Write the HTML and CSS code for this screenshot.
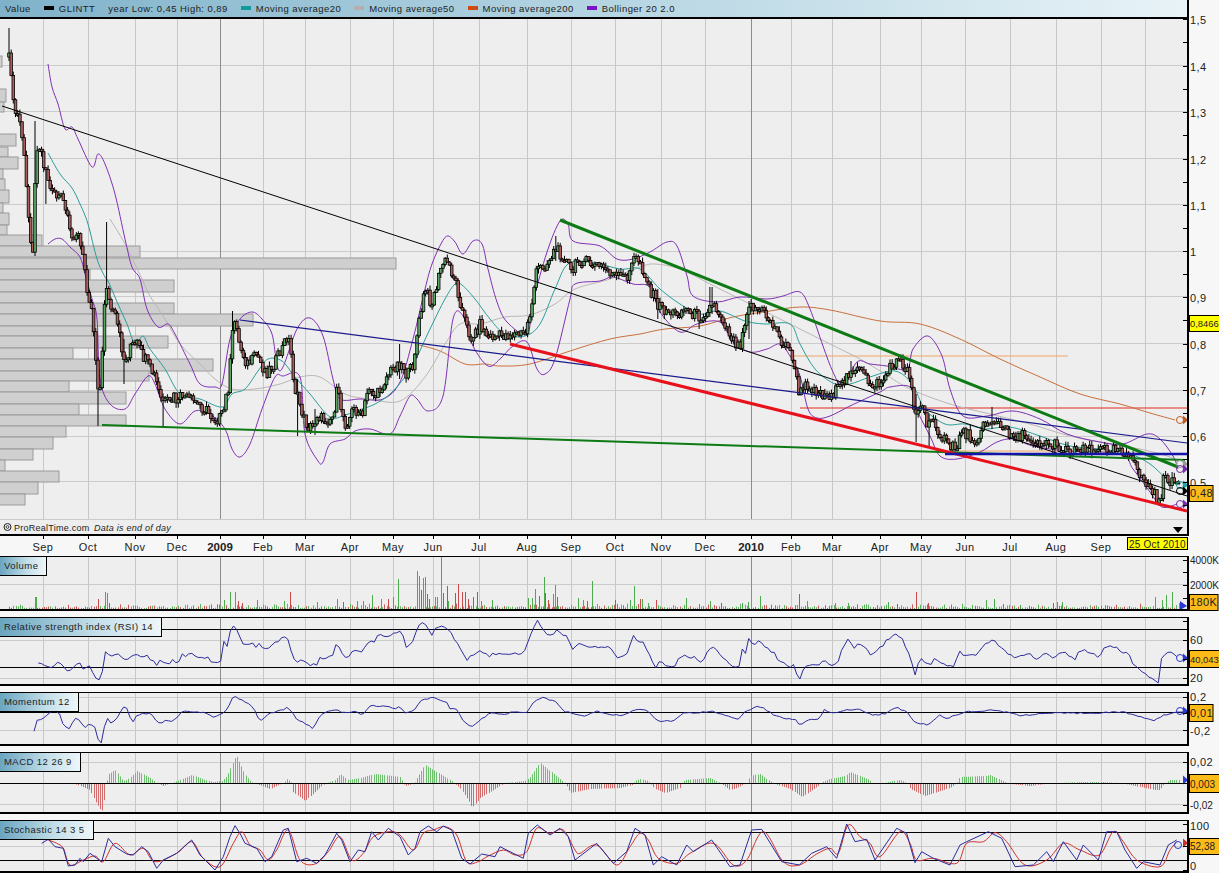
FILE: index.html
```html
<!DOCTYPE html>
<html lang="en">
<head>
    <meta charset="UTF-8">
    <title>GLINTT - ProRealTime chart</title>
    <link rel="stylesheet" href="styles.css">
</head>
<body>
    <div class="chart">
        <div class="panel price-panel">
            <div class="price-main">
                <div class="legend">
                    <span class="legend-item">Value</span>
                    <span class="legend-item"><i class="swatch swatch-black"></i>GLINTT</span>
                    <span class="legend-item">year Low: 0,45 High: 0,89</span>
                    <span class="legend-item"><i class="swatch swatch-teal"></i>Moving average20</span>
                    <span class="legend-item"><i class="swatch swatch-grey"></i>Moving average50</span>
                    <span class="legend-item"><i class="swatch swatch-orange"></i>Moving average200</span>
                    <span class="legend-item"><i class="swatch swatch-purple"></i>Bollinger 20 2.0</span>
                </div>
                <svg class="plot-svg" id="price-plot" width="1187" height="517"></svg>
            </div>
            <svg class="axis" id="price-axis" width="30" height="536"></svg>
        </div>
        <svg class="time-axis" id="time-axis" width="1219" height="20"></svg>

        <div class="indicators">
            <div class="panel volume-panel">
                <div class="plot">
                    <div class="tab">Volume</div>
                    <svg class="plot-svg" id="volume-plot" width="1187" height="52"></svg>
                </div>
                <svg class="axis" id="volume-axis" width="30" height="55"></svg>
            </div>
            <div class="panel rsi-panel">
                <div class="plot">
                    <div class="tab">Relative strength index (RSI) 14</div>
                    <svg class="plot-svg" id="rsi-plot" width="1187" height="66"></svg>
                </div>
                <svg class="axis" id="rsi-axis" width="30" height="69"></svg>
            </div>
            <div class="panel momentum-panel">
                <div class="plot">
                    <div class="tab">Momentum 12</div>
                    <svg class="plot-svg" id="momentum-plot" width="1187" height="51"></svg>
                </div>
                <svg class="axis" id="momentum-axis" width="30" height="54"></svg>
            </div>
            <div class="panel macd-panel">
                <div class="plot">
                    <div class="tab">MACD 12 26 9</div>
                    <svg class="plot-svg" id="macd-plot" width="1187" height="59"></svg>
                </div>
                <svg class="axis" id="macd-axis" width="30" height="62"></svg>
            </div>
            <div class="panel stochastic-panel">
                <div class="plot">
                    <div class="tab">Stochastic 14 3 5</div>
                    <svg class="plot-svg" id="stochastic-plot" width="1187" height="50"></svg>
                </div>
                <svg class="axis" id="stochastic-axis" width="30" height="53"></svg>
            </div>
        </div>
    </div>

    <script src="chart.js"></script>
</body>
</html>
```

FILE: styles.css
```css
body {
    margin: 0;
    background: #f7f7f7;
    font-family: "Liberation Sans", Arial, sans-serif;
    overflow: hidden;
}
.chart {
    width: 1219px;
    height: 873px;
    overflow: hidden;
}
.panel {
    display: flex;
    width: 1219px;
}
.price-panel {
    height: 536px;
}
.price-main {
    width: 1187px;
    flex: none;
    border-right: 2px solid #000;
    border-bottom: 2px solid #000;
    height: 534px;
    overflow: hidden;
    background: #eeeeee;
}
.legend {
    height: 18px;
    box-sizing: border-box;
    border-bottom: 1px solid #000;
    background: linear-gradient(90deg, #7fb2ca 0%, #b4d4e2 50%, #e8f3f7 100%);
    display: flex;
    align-items: center;
    gap: 13px;
    padding-left: 5px;
    font-size: 9.5px;
    letter-spacing: 0.45px;
    color: #222;
    white-space: nowrap;
}
.swatch {
    display: inline-block;
    width: 10px;
    height: 4px;
    margin-right: 5px;
    vertical-align: 2px;
}
.swatch-black { background: #000; }
.swatch-teal { background: #119c9c; }
.swatch-grey { background: #b5aeae; }
.swatch-orange { background: #d24a10; }
.swatch-purple { background: #7a10c8; }
.plot-svg {
    display: block;
}
.axis {
    display: block;
    flex: none;
    overflow: hidden;
}
.axis text, .time-axis text {
    font-size: 11px;
    letter-spacing: 0.4px;
    fill: #222;
}
.axis .small {
    font-size: 10px;
    letter-spacing: 0;
}
.axis .smaller {
    font-size: 9.4px;
    letter-spacing: 0;
}
.time-axis {
    display: block;
}
.time-axis .year {
    font-weight: bold;
    letter-spacing: 0;
    font-size: 11.5px;
}
.time-axis .date-text {
    font-size: 10px;
    letter-spacing: 0.2px;
}
.plot-svg text {
    font-size: 9px;
    letter-spacing: 0.25px;
    fill: #222;
}
.plot-svg .italic {
    font-style: italic;
}
.indicators {
    display: flex;
    flex-direction: column;
    gap: 6px;
}
.plot {
    position: relative;
    width: 1187px;
    flex: none;
    border-top: 1px solid #000;
    border-right: 2px solid #000;
    border-bottom: 2px solid #000;
    background: #eeeeee;
    overflow: hidden;
}
.volume-panel { height: 55px; }
.rsi-panel { height: 69px; }
.momentum-panel { height: 54px; }
.macd-panel { height: 62px; }
.stochastic-panel { height: 53px; }
.tab {
    position: absolute;
    top: 0;
    left: 0;
    height: 18px;
    line-height: 18px;
    padding: 0 8px 0 4px;
    border-right: 1px solid #000;
    border-bottom: 1px solid #000;
    background: linear-gradient(90deg, #6aa5c0 0%, #c4dfe9 60%, #eef6f9 100%);
    font-size: 9.5px;
    letter-spacing: 0.45px;
    color: #222;
    white-space: nowrap;
}
```

FILE: chart.js
```js
// all series are kept in page pixels, each svg's viewBox maps to its place on the page
const gridX = [43, 88, 135, 177, 220, 263, 305, 350, 393, 433, 479, 527, 571, 615, 661, 705, 751, 791, 832, 880, 921, 965, 1010, 1056, 1101, 1145];
const yearLines = [220, 751];

function rnd(i) {
    const v = Math.sin(i * 12.9898) * 43758.5453;
    return v - Math.floor(v);
}

// samples were read off 3x crops: flat x,y list plus the crop's origin
function crop(ox, oy, list) {
    const out = [];
    for (let i = 0; i < list.length; i += 2) {
        out.push([ox + list[i] / 3, oy + list[i + 1] / 3]);
    }
    return out;
}

function pairs(list) {
    return crop(0, 0, list.map(v => v * 3));
}

function line(x1, y1, x2, y2, color, width) {
    return `<line x1="${x1}" y1="${y1}" x2="${x2}" y2="${y2}" stroke="${color}" stroke-width="${width}"/>`;
}

function poly(points, color, width) {
    const d = points.map(p => p[0].toFixed(1) + ',' + p[1].toFixed(1)).join(' ');
    return `<polyline points="${d}" fill="none" stroke="${color}" stroke-width="${width}"/>`;
}

// catmull-rom through the samples, the averages are smooth in the original
function curve(p, color, width) {
    let d = `M${p[0][0].toFixed(1)} ${p[0][1].toFixed(1)}`;
    for (let i = 0; i < p.length - 1; i++) {
        const a = p[Math.max(i - 1, 0)], b = p[i], c = p[i + 1], e = p[Math.min(i + 2, p.length - 1)];
        const c1x = b[0] + (c[0] - a[0]) / 6, c1y = b[1] + (c[1] - a[1]) / 6;
        const c2x = c[0] - (e[0] - b[0]) / 6, c2y = c[1] - (e[1] - b[1]) / 6;
        d += `C${c1x.toFixed(1)} ${c1y.toFixed(1)} ${c2x.toFixed(1)} ${c2y.toFixed(1)} ${c[0].toFixed(1)} ${c[1].toFixed(1)}`;
    }
    return `<path d="${d}" fill="none" stroke="${color}" stroke-width="${width}"/>`;
}

function marker(x, y, color) {
    return `<circle cx="${x - 7}" cy="${y}" r="3.5" fill="none" stroke="${color}" stroke-width="1"/>` + arrow(x, y, color);
}

function arrow(x, y, color) {
    return `<polygon points="${x - 4},${y - 4.5} ${x + 1},${y} ${x - 4},${y + 4.5}" fill="${color}"/>`;
}

function interp(points, x) {
    if (x <= points[0][0]) return points[0][1];
    for (let i = 1; i < points.length; i++) {
        if (x <= points[i][0]) {
            const a = points[i - 1], b = points[i];
            return a[1] + (b[1] - a[1]) * (x - a[0]) / (b[0] - a[0] || 1);
        }
    }
    return points[points.length - 1][1];
}

// daily noise on top of the read samples for the oscillators
function jagged(points, amp) {
    const out = [];
    const last = points[points.length - 1][0];
    let n = 0;
    for (let x = points[0][0]; x < last; x += 3.2) {
        out.push([x, interp(points, x) + (rnd(n++ + 300) - 0.5) * amp]);
    }
    out.push(points[points.length - 1]);
    return out;
}

function grid(top, bottom, rows) {
    let s = '';
    rows.forEach(y => { s += line(0, y + 0.5, 1187, y + 0.5, '#cbcbcb', 1); });
    gridX.forEach(x => {
        s += line(x + 0.5, top, x + 0.5, bottom, yearLines.includes(x) ? '#8c8c8c' : '#c8c8c8', 1);
    });
    return s;
}

function ticks(ys) {
    return ys.map(y => line(1183, y + 0.5, 1187, y + 0.5, '#000', 1)).join('');
}

function setup(id, top, height, left, width, html) {
    const svg = document.getElementById(id);
    svg.setAttribute('viewBox', `${left} ${top} ${width} ${height}`);
    svg.innerHTML = html;
}

// the scale is 30px wide, long values get a smaller size so they stay inside it
function sizeClass(text) {
    if (text.length >= 6) return ' class="smaller"';
    if (text.length === 5) return ' class="small"';
    return '';
}

function axisLabel(y, text) {
    return `<text x="1190" y="${y + 4}"${sizeClass(text)}>${text}</text>`;
}

function axisTag(y1, y2, right, color, text) {
    return `<rect x="1189.5" y="${y1 + 0.5}" width="${right - 1189.5}" height="${y2 - y1}" fill="${color}" stroke="#000" stroke-width="1"/>` +
        `<text x="1190" y="${y2 - 4}"${sizeClass(text)}>${text}</text>`;
}

// ---------- price panel ----------
const profile = [
    [57, 68, 2], [90, 103, 6], [103, 113, 4], [135, 147, 16], [148, 158, 8], [158, 170, 18], [170, 180, 3],
    [180, 192, 5], [191, 204, 9], [204, 214, 3], [214, 226, 9], [226, 236, 7], [236, 247, 42], [247, 258, 140],
    [259, 270, 396], [270, 281, 90], [281, 293, 174], [293, 304, 90], [304, 315, 174], [315, 327, 253],
    [327, 337, 92], [337, 349, 168], [349, 360, 73], [360, 372, 213], [372, 382, 149], [382, 393, 69],
    [393, 405, 126], [405, 416, 79], [416, 427, 126], [427, 438, 66], [438, 450, 53], [450, 461, 33],
    [461, 472, 5], [472, 483, 59], [483, 495, 38], [495, 506, 25]
];

const pricePath = pairs([
    9, 60, 11, 66, 12, 98, 14, 110, 16, 115, 19, 118, 22, 137, 24, 158, 27, 198, 29, 224, 31, 240, 33, 250,
    35, 190, 36, 150, 38, 143, 40, 148, 42, 155, 45, 170, 47, 173, 50, 192, 53, 187, 56, 197, 60, 197, 64, 205,
    67, 218, 69, 232, 72, 240, 75, 232, 78, 235, 82, 255, 85, 270, 88, 295, 90, 300, 93, 320, 95, 350, 97, 375,
    99, 395, 101, 385, 103, 340, 105, 290, 107, 285, 109, 305, 113, 315, 116, 320, 120, 340, 124, 360, 127, 362,
    130, 345, 134, 348, 137, 345, 141, 355, 146, 362, 150, 370, 155, 378, 158, 390, 161, 400, 165, 403, 170, 405,
    174, 398, 178, 405, 182, 395, 187, 400, 192, 402, 198, 405, 205, 410, 212, 418, 218, 420, 223, 416, 226, 398,
    229, 385, 232, 340, 234, 322, 237, 325, 239, 345, 243, 355, 247, 365, 252, 362, 257, 355, 262, 367, 267, 373,
    272, 367, 277, 360, 282, 350, 287, 337, 290, 345, 293, 375, 296, 395, 300, 405, 304, 420, 308, 428, 313, 428,
    317, 415, 322, 420, 328, 420, 333, 418, 337, 392, 341, 408, 345, 425, 349, 420, 353, 410, 358, 412, 362, 420,
    367, 395, 370, 385, 374, 398, 378, 395, 383, 385, 388, 375, 393, 370, 397, 365, 403, 365, 407, 378, 413, 365,
    418, 330, 425, 290, 432, 305, 442, 265, 447, 262, 455, 280, 462, 310, 467, 330, 472, 340, 480, 325, 488, 338,
    500, 337, 513, 335, 525, 335, 530, 315, 537, 270, 547, 265, 555, 250, 565, 258, 572, 275, 578, 260, 590, 265,
    603, 268, 617, 278, 627, 278, 635, 258, 640, 262, 648, 285, 657, 305, 663, 310, 675, 315, 685, 310, 700, 318,
    713, 305, 722, 318, 730, 335, 737, 345, 740, 345, 743, 330, 748, 305, 763, 313, 773, 325, 780, 340, 792, 355,
    798, 390, 800, 395, 807, 385, 817, 392, 827, 397, 837, 392, 843, 385, 850, 370, 860, 372, 870, 385, 880, 385,
    890, 370, 897, 360, 907, 370, 912, 385, 915, 420, 917, 410, 923, 408, 928, 430, 933, 418, 940, 435, 948, 447,
    957, 450, 960, 430, 970, 438, 977, 440, 985, 425, 993, 420, 1003, 430, 1013, 436, 1027, 438, 1040, 443,
    1057, 447, 1073, 452, 1083, 447, 1100, 451, 1117, 447, 1125, 453, 1130, 460, 1140, 475, 1150, 490, 1160, 503,
    1162, 490, 1163, 482, 1173, 480, 1180, 490
]);

const longWicks = [
    [9, 29, 62], [36, 122, 170], [46, 190, 205], [99, 380, 427], [107, 223, 285], [124, 340, 385], [163, 395, 427],
    [232, 312, 360], [297, 380, 437], [315, 410, 436], [400, 345, 380], [555, 237, 262], [657, 290, 320],
    [700, 310, 330], [711, 288, 315], [748, 302, 340], [915, 395, 443], [930, 415, 447], [993, 408, 430],
    [850, 362, 380], [1172, 473, 490]
];

const ma20 = pairs([
    48, 154, 60, 175, 72, 189, 80, 205, 88, 225, 97, 260, 105, 278, 108, 282, 118, 305, 127, 325, 135, 345, 143, 337,
    150, 350, 165, 370, 180, 395, 200, 400, 222, 408, 232, 395, 245, 390, 258, 372, 268, 360, 282, 362, 295, 378,
    310, 395, 330, 418, 345, 416, 362, 410, 375, 405, 390, 395, 405, 378, 415, 362, 430, 330, 445, 300, 455, 285,
    462, 286, 475, 300, 490, 320, 505, 335, 525, 337, 540, 325, 555, 290, 568, 265, 590, 263, 620, 270, 640, 270,
    660, 290, 680, 305, 700, 315, 720, 312, 745, 322, 765, 325, 790, 325, 800, 345, 815, 370, 835, 385, 850, 385,
    870, 378, 895, 372, 912, 385, 925, 410, 945, 425, 965, 425, 985, 430, 1010, 428, 1040, 437, 1070, 447, 1100, 450,
    1130, 455, 1150, 465, 1165, 478, 1180, 486
]);

const ma50 = pairs([
    110, 220, 125, 245, 142, 280, 150, 297, 165, 320, 180, 345, 200, 365, 215, 380, 232, 390, 255, 390, 280, 385,
    300, 378, 320, 378, 345, 395, 370, 400, 400, 402, 425, 378, 445, 345, 460, 325, 480, 325, 505, 318, 530, 316,
    555, 305, 575, 290, 610, 280, 640, 268, 655, 265, 680, 270, 710, 285, 740, 300, 770, 315, 800, 330, 830, 345,
    860, 360, 885, 375, 910, 390, 950, 405, 990, 415, 1030, 425, 1070, 437, 1110, 445, 1140, 450, 1170, 458, 1178, 465
]);

const ma200 = pairs([
    415, 345, 440, 352, 465, 365, 485, 365, 500, 367, 530, 365, 570, 352, 610, 340, 640, 335, 665, 330, 700, 327,
    733, 318, 770, 312, 800, 308, 830, 311, 880, 322, 920, 325, 960, 340, 1000, 360, 1040, 378, 1080, 395, 1120, 405,
    1150, 414, 1175, 421
]);

const bollUp = pairs([
    48, 65, 52, 88, 58, 105, 65, 130, 72, 128, 78, 140, 92, 168, 98, 155, 105, 165, 115, 195, 125, 240, 132, 268,
    140, 280, 147, 310, 158, 328, 168, 325, 175, 335, 190, 365, 200, 385, 215, 388, 222, 385, 230, 340, 240, 320,
    252, 313, 262, 320, 272, 335, 280, 372, 297, 330, 310, 319, 323, 337, 333, 380, 340, 400, 360, 400, 383, 400,
    400, 383, 413, 340, 425, 290, 432, 265, 442, 243, 448, 237, 455, 243, 463, 255, 473, 242, 482, 245, 488, 270,
    497, 303, 507, 323, 527, 335, 533, 303, 547, 253, 560, 222, 568, 225, 573, 242, 600, 247, 617, 260, 633, 260,
    650, 253, 667, 243, 677, 247, 687, 277, 693, 297, 717, 303, 740, 298, 767, 300, 783, 297, 800, 293, 810, 310,
    823, 347, 833, 373, 843, 387, 857, 363, 870, 365, 887, 367, 907, 370, 913, 350, 928, 337, 942, 357, 950, 390,
    963, 417, 987, 417, 1013, 412, 1040, 420, 1067, 435, 1100, 443, 1123, 445, 1147, 435, 1160, 440, 1173, 457, 1178, 470
]);

const bollDown = pairs([
    48, 245, 55, 240, 62, 240, 70, 248, 80, 258, 85, 275, 92, 300, 97, 320, 100, 380, 110, 405, 125, 410, 135, 395,
    148, 377, 155, 385, 165, 410, 180, 425, 195, 412, 210, 415, 225, 430, 232, 450, 240, 458, 250, 445, 262, 410,
    275, 378, 283, 377, 300, 378, 305, 435, 318, 462, 323, 463, 330, 445, 345, 440, 355, 432, 370, 430, 390, 435,
    400, 417, 410, 397, 417, 400, 428, 412, 443, 397, 453, 320, 463, 317, 473, 347, 488, 367, 500, 360, 513, 347,
    527, 343, 537, 370, 545, 375, 555, 360, 570, 300, 575, 285, 600, 282, 613, 278, 633, 285, 650, 288, 660, 313,
    680, 333, 697, 325, 720, 323, 733, 343, 750, 353, 767, 350, 780, 345, 790, 357, 800, 377, 808, 410, 817, 419,
    830, 417, 850, 407, 880, 393, 890, 388, 910, 388, 915, 407, 930, 437, 940, 457, 957, 460, 980, 453, 997, 443,
    1013, 440, 1033, 447, 1067, 452, 1120, 455, 1133, 470, 1150, 493, 1162, 508, 1177, 505
]);

function candles() {
    let out = '';
    let prev = pricePath[0][1] - 2;
    for (let i = 0; i * 2.17 + 9 <= 1180; i++) {
        const x = i * 2.17 + 9;
        const close = interp(pricePath, x) + (rnd(i) - 0.5) * 12;
        const open = prev;
        let hi = Math.min(open, close) - rnd(i + 700) * 5;
        let lo = Math.max(open, close) + rnd(i + 1400) * 5;
        longWicks.forEach(w => {
            if (Math.abs(w[0] - x) < 1.1) { hi = Math.min(hi, w[1]); lo = Math.max(lo, w[2]); }
        });
        const up = close < open;
        out += line(x.toFixed(1), hi.toFixed(1), x.toFixed(1), lo.toFixed(1), '#000', 1);
        out += `<rect x="${(x - 1.3).toFixed(1)}" y="${Math.min(open, close).toFixed(1)}" width="2.6" height="${Math.max(Math.abs(open - close), 2).toFixed(1)}" fill="${up ? '#5fa864' : '#ab5f5c'}" stroke="#000" stroke-width="0.8"/>`;
        prev = close;
    }
    return out;
}

let price = grid(19, 520, [66, 112, 159, 205, 252, 297, 344, 391, 437, 482, 520]);
price += line(0, 19.5, 1187, 19.5, '#000', 1);
profile.forEach(b => {
    price += `<rect x="-1" y="${b[0]}" width="${b[2] + 1}" height="${b[1] - b[0]}" fill="#cfcfcf" stroke="#9a9a9a" stroke-width="1"/>`;
});
price += line(800, 409, 1187, 409, '#e8281c', 1);
price += line(790, 357, 1068, 357, '#f2a468', 1);
price += line(945, 452, 1130, 452, '#f2a468', 1);
price += curve(ma200, '#c8703c', 1);
price += curve(ma50, '#bdb5b5', 1);
price += curve(bollUp, '#8030b4', 1);
price += curve(bollDown, '#8030b4', 1);
price += curve(ma20, '#2a9d9a', 1);
price += candles();
price += line(2, 107, 1187, 497, '#000', 1);
price += line(240, 321, 1187, 444, '#1a1a8c', 1.2);
price += line(102, 426, 1185, 461, '#0d7a14', 2);
price += line(560, 221, 1178, 468, '#0d7a14', 3);
price += line(510, 345, 1187, 512, '#e8101a', 3);
price += line(945, 455, 1187, 455, '#1414a8', 2.5);
price += marker(1187, 421, '#c05a20') + marker(1187, 465, '#9a9a9a') + marker(1187, 470, '#7b2cb4');
price += marker(1187, 486, '#1fa5a5') + marker(1187, 492, '#000') + marker(1187, 505, '#7b2cb4');
price += `<polygon points="1173,528 1183,528 1178,534" fill="#000"/>`;
price += ticks([20, 43, 67, 90, 113, 136, 160, 183, 206, 229, 252, 275, 298, 321, 345, 368, 391, 414, 437, 460, 483, 506]);
price += `<circle cx="7.5" cy="528" r="3.5" fill="none" stroke="#222" stroke-width="1"/><circle cx="7.5" cy="528" r="1.4" fill="none" stroke="#222" stroke-width="0.8"/>`;
price += `<text x="14" y="532">ProRealTime.com</text><text x="94" y="532" class="italic">Data is end of day</text>`;
setup('price-plot', 19, 517, 0, 1187, price);

let priceAxis = '';
[[20, '1,5'], [67, '1,4'], [113, '1,3'], [160, '1,2'], [206, '1,1'], [252, '1'], [298, '0,9'], [345, '0,8'], [391, '0,7'], [437, '0,6'], [483, '0,5']].forEach(t => {
    priceAxis += axisLabel(t[0], t[1]);
});
priceAxis += axisTag(315, 331, 1225, '#ffff00', '0,8466');
priceAxis += axisTag(485, 501, 1213, '#fdbb1a', '0,48');
setup('price-axis', 0, 536, 1189, 30, priceAxis);

// ---------- time axis ----------
const months = [
    [43, 'Sep'], [88, 'Oct'], [135, 'Nov'], [177, 'Dec'], [220, '2009'], [263, 'Feb'], [305, 'Mar'], [350, 'Apr'], [393, 'May'],
    [433, 'Jun'], [479, 'Jul'], [527, 'Aug'], [571, 'Sep'], [615, 'Oct'], [661, 'Nov'], [705, 'Dec'], [751, '2010'], [791, 'Feb'],
    [832, 'Mar'], [880, 'Apr'], [921, 'May'], [965, 'Jun'], [1010, 'Jul'], [1056, 'Aug'], [1101, 'Sep']
];
let timeAxis = '';
months.forEach(m => {
    const year = m[1].length === 4;
    timeAxis += line(m[0] + 0.5, 536, m[0] + 0.5, 539, '#000', 1);
    timeAxis += `<text x="${m[0]}" y="551" text-anchor="middle"${year ? ' class="year"' : ''}>${m[1]}</text>`;
});
timeAxis += `<rect x="1127.5" y="537.5" width="60" height="12" fill="#ffff00" stroke="#000" stroke-width="1"/>`;
timeAxis += `<text x="1129" y="547.5" class="date-text">25 Oct 2010</text>`;
setup('time-axis', 536, 20, 0, 1219, timeAxis);

// ---------- volume ----------
const volumePeaks = [
    [35, 12, 1], [36, 12, 1], [98, 10, 0], [105, 17, 1], [107, 16, 1], [109, 6, 0], [224, 9, 1], [230, 17, 1], [235, 17, 1], [238, 8, 0],
    [242, 6, 0], [257, 9, 1], [284, 8, 1], [290, 17, 0], [317, 7, 1], [337, 10, 1], [343, 7, 0], [357, 8, 1], [363, 8, 1], [372, 14, 1],
    [381, 10, 1], [388, 10, 0], [393, 12, 1], [398, 30, 1], [417, 38, 1], [419, 33, 1], [421, 19, 0], [423, 31, 1], [425, 32, 1], [427, 15, 0],
    [429, 10, 0], [435, 12, 1], [437, 12, 1], [441, 52, 1], [443, 16, 0], [447, 23, 0], [448, 8, 1], [455, 16, 0], [458, 25, 0], [462, 17, 0],
    [465, 17, 0], [468, 10, 0], [473, 12, 0], [477, 17, 0], [481, 8, 1], [492, 9, 1], [528, 11, 1], [532, 11, 1], [535, 20, 1], [539, 13, 0],
    [544, 32, 1], [545, 16, 0], [548, 9, 0], [553, 15, 1], [555, 24, 1], [557, 12, 0], [578, 11, 1], [583, 9, 1], [587, 8, 0], [592, 28, 1],
    [615, 9, 0], [630, 9, 1], [634, 23, 1], [640, 10, 0], [642, 10, 1], [648, 6, 1], [656, 9, 0], [686, 11, 1], [710, 8, 1], [721, 6, 0],
    [742, 6, 1], [748, 7, 1], [760, 13, 1], [799, 15, 0], [807, 8, 1], [835, 6, 1], [848, 6, 1], [888, 7, 1], [897, 5, 0], [916, 17, 0],
    [928, 6, 0], [986, 9, 1], [994, 10, 1], [1053, 6, 0], [1057, 7, 1], [1062, 7, 1], [1020, 4, 1], [1155, 12, 1], [1162, 9, 1], [1166, 14, 1],
    [1172, 17, 1], [1179, 6, 1]
];
let volume = grid(557, 609, [584]);
for (let i = 0; i * 2.17 + 9 <= 1180; i++) {
    const x = Math.round(i * 2.17 + 9) + 0.5;
    const h = 1 + rnd(i + 50) * rnd(i + 90) * 5;
    volume += line(x, 609, x, 609 - h, rnd(i + 33) > 0.45 ? '#5cb45c' : '#cc5a5a', 1);
}
volumePeaks.forEach(p => {
    volume += line(p[0] + 0.5, 609, p[0] + 0.5, 609 - p[1], p[2] ? '#4cac4c' : '#c84a4a', 1);
});
volume += `<polygon points="1180,601 1187,606 1180,610" fill="#2a3ad0"/>`;
volume += ticks([560, 572, 585, 598]);
setup('volume-plot', 557, 52, 0, 1187, volume);
setup('volume-axis', 556, 55, 1189, 30,
    axisLabel(560, '4000K') + axisLabel(585, '2000K') + axisTag(594, 610, 1218, '#fdbb1a', '180K'));

// ---------- rsi ----------
const rsi = [
    ...crop(0, 550, [115, 342, 135, 343, 150, 355, 160, 347, 175, 338, 190, 347, 208, 365, 225, 345, 240, 340, 250, 357, 265, 342, 275, 368, 295, 388, 305, 378, 315, 300, 335, 320, 350, 310, 380, 330, 400, 310, 420, 318, 440, 316, 470, 342, 480, 330, 510, 340, 520, 328, 535, 342, 545, 310, 560, 322, 570, 310, 600, 323, 625, 322, 635, 340, 665, 330, 672, 275, 680, 297, 695, 225, 705, 225, 720, 265, 735, 288, 755, 280, 770, 290, 775, 275, 795, 298, 830, 275, 850, 260, 865, 265, 875, 310, 895, 345, 905, 330, 925, 345, 950, 342, 955, 320, 975, 325, 1000, 318, 1010, 278, 1030, 320, 1045, 322, 1060, 295, 1080, 310, 1110, 270, 1120, 280, 1140, 250, 1165, 262, 1200, 240]),
    ...crop(400, 550, [5, 243, 18, 292, 40, 270, 55, 225, 72, 217, 95, 255, 105, 240, 128, 225, 150, 238, 165, 270, 180, 298, 200, 330, 240, 300, 265, 318, 300, 307, 340, 313, 370, 310, 395, 245, 412, 212, 430, 240, 445, 262, 470, 240, 505, 262, 518, 303, 535, 278, 565, 288, 630, 292, 658, 328, 680, 310, 703, 247, 715, 290, 725, 262, 750, 320, 767, 355, 775, 330, 800, 345, 822, 355, 830, 328, 855, 315, 870, 330, 880, 320, 905, 335, 935, 285, 960, 310, 1000, 355, 1018, 352, 1025, 293, 1035, 315, 1045, 265, 1060, 285, 1078, 272, 1110, 305, 1118, 300, 1140, 338, 1170, 348, 1180, 343, 1198, 393]),
    ...crop(700, 550, [315, 350, 335, 347, 352, 350, 370, 328, 385, 343, 412, 345, 425, 295, 445, 265, 460, 300, 470, 280, 500, 292, 515, 317, 545, 290, 565, 265, 585, 253, 610, 272, 630, 320, 645, 375, 660, 322, 690, 350, 700, 325, 740, 350, 765, 345, 778, 300, 790, 312, 825, 317, 855, 278, 880, 270, 900, 290, 945, 325, 985, 310, 1010, 325, 1040, 310, 1060, 325, 1075, 315, 1095, 310, 1125, 332, 1140, 298, 1185, 310, 1198, 325]),
    ...crop(1000, 530, [300, 385, 305, 350, 325, 350, 345, 350, 360, 365, 385, 370, 395, 395, 410, 412, 440, 435, 475, 457, 480, 410, 488, 375, 515, 362, 530, 380])
];
let rsiSvg = grid(618, 684, [640, 678]);
rsiSvg += line(0, 629.5, 1187, 629.5, '#000', 1) + line(0, 667.5, 1187, 667.5, '#000', 1);
rsiSvg += poly(jagged(rsi, 3), '#2b2b9e', 1) + marker(1187, 658, '#2a3ad0');
rsiSvg += ticks([621, 640, 659, 678]);
setup('rsi-plot', 618, 66, 0, 1187, rsiSvg);
setup('rsi-axis', 617, 69, 1189, 30,
    axisLabel(640, '60') + axisLabel(678, '20') + axisTag(650, 667, 1225, '#fdbb1a', '40,043'));

// ---------- momentum ----------
const momentum = [
    ...crop(0, 550, [102, 545, 112, 510, 130, 505, 150, 487, 155, 482, 178, 488, 185, 515, 205, 540, 225, 505, 240, 510, 255, 535, 270, 520, 285, 530, 295, 570, 305, 578, 318, 500, 335, 522, 350, 505, 370, 470, 385, 475, 395, 525, 410, 495, 430, 490, 455, 490, 470, 515, 485, 518, 495, 510, 510, 515, 530, 505, 545, 485, 575, 485, 610, 487, 640, 500, 665, 493, 680, 480, 700, 438, 715, 445, 745, 462, 760, 470, 780, 515, 800, 495, 815, 488, 850, 478, 865, 470, 890, 510, 915, 520, 940, 535, 960, 495, 985, 485, 1010, 480, 1025, 487, 1075, 485, 1085, 497, 1110, 468, 1150, 468, 1185, 475, 1200, 470]),
    ...crop(400, 550, [15, 487, 40, 483, 65, 450, 100, 443, 140, 455, 150, 475, 170, 480, 195, 520, 215, 530, 240, 510, 275, 487, 320, 493, 340, 485, 380, 487, 405, 452, 430, 443, 470, 455, 490, 483, 515, 490, 555, 497, 590, 482, 610, 490, 660, 497, 720, 475, 745, 485, 775, 513, 820, 512, 850, 490, 895, 487, 940, 483, 1012, 510, 1035, 485, 1075, 468, 1105, 483, 1130, 500, 1190, 510, 1198, 528]),
    ...crop(700, 550, [320, 513, 360, 505, 372, 478, 395, 490, 420, 483, 480, 477, 520, 497, 555, 490, 590, 473, 620, 485, 645, 518, 685, 525, 720, 495, 735, 507, 780, 490, 800, 485, 880, 480, 925, 487, 960, 497, 1000, 493, 1040, 490, 1100, 490, 1195, 488]),
    ...crop(1000, 530, [300, 548, 370, 546, 420, 560, 465, 572, 490, 555, 535, 545, 555, 543])
];
let momentumSvg = grid(693, 744, [697, 730]);
momentumSvg += line(0, 712.5, 1187, 712.5, '#000', 1);
momentumSvg += poly(jagged(momentum, 1.5), '#2b2b9e', 1) + marker(1187, 711, '#2a3ad0');
momentumSvg += ticks([697, 713, 730]);
setup('momentum-plot', 693, 51, 0, 1187, momentumSvg);
setup('momentum-axis', 692, 54, 1189, 30,
    axisLabel(697, '0,2') + axisLabel(731, '-0,2') + axisTag(704, 721, 1213, '#fdbb1a', '0,01'));

// ---------- macd ----------
const macd = pairs([
    70, 0, 78, -2, 85, -5, 90, -7, 95, -18, 102, -29, 106, -10, 106.5, 0, 107, 8, 115, 13, 123, 2, 127, 3, 137, 12, 150, 5, 157, 0,
    163, -3, 172, 0, 180, 3, 192, 8, 205, 3, 213, 1, 222, 2, 227, 7, 236, 28, 245, 8, 250, 2, 253, 0, 270, -6, 283, 0, 287, 4,
    292, 0, 293, -9, 305, -18, 323, -2, 327, 0, 335, 3, 340, 9, 348, 3, 360, 5, 375, 9, 400, 6, 403, 0, 405, -3, 414, -1, 417, 5,
    425, 18, 445, 6, 453, 1, 455, -1, 460, -5, 470, -20, 472, -25, 480, -15, 500, -3, 505, 0, 525, 2, 530, 6, 540, 20, 555, 8,
    565, 0, 570, -10, 590, -6, 620, -5, 632, -2, 635, 2, 640, 4, 648, 2, 650, 0, 655, -6, 665, -10, 680, -5, 682, 0, 685, 3,
    710, 5, 720, 0, 730, -7, 737, -5, 747, 0, 750, 7, 760, 9, 768, 3, 773, 0, 775, -1, 790, -6, 802, -14, 820, -2, 822, 1,
    830, 4, 845, 7, 850, 11, 870, 3, 872, 0, 880, -1, 888, 1, 900, 3, 907, 0, 910, -6, 925, -13, 950, -5, 957, 0, 960, 6, 985, 7,
    990, 8, 1005, 1, 1010, -1, 1030, -3, 1045, -1, 1060, 0, 1080, 1, 1100, 1, 1120, 0, 1125, -1, 1135, -3, 1155, -7, 1160, -7, 1165, 0,
    1170, 3, 1178, 3
]);
let macdSvg = grid(752, 812, [761, 803]);
for (let i = 0; i * 2.17 + 9 <= 1180; i++) {
    const x = i * 2.17 + 9;
    if (x < 70) continue;
    const h = interp(macd, x);
    const px = Math.round(x) + 0.5;
    macdSvg += line(px, 782, px, (782 - h).toFixed(1), h > 0 ? '#6cbf6c' : '#d06c6c', 1);
}
macdSvg += line(0, 782.5, 1187, 782.5, '#000', 1) + arrow(1187, 779, '#2a3ad0');
macdSvg += ticks([761, 782, 804]);
setup('macd-plot', 752, 59, 0, 1187, macdSvg);
setup('macd-axis', 751, 62, 1189, 30,
    axisLabel(761, '0,02') + axisLabel(804, '-0,02') + axisTag(773, 791, 1225, '#fdbb1a', '0,003'));

// ---------- stochastic ----------
const stochBlue = [
    ...crop(0, 550, [125, 880, 145, 868, 165, 890, 190, 895, 205, 948, 225, 945, 240, 925, 250, 935, 270, 910, 290, 925, 305, 935, 325, 865, 345, 890, 380, 912, 400, 915, 425, 890, 445, 905, 470, 955, 490, 930, 530, 910, 575, 870, 600, 915, 645, 960, 670, 920, 690, 860, 705, 827, 720, 850, 735, 880, 770, 895, 795, 935, 815, 920, 850, 840, 865, 835, 890, 935, 920, 925, 950, 940, 975, 915, 1010, 850, 1025, 870, 1050, 935, 1075, 900, 1095, 905, 1115, 845, 1135, 870, 1165, 835, 1200, 860]),
    ...crop(400, 550, [25, 915, 45, 895, 60, 845, 85, 828, 110, 845, 130, 828, 155, 840, 185, 925, 210, 942, 245, 912, 285, 920, 300, 890, 330, 905, 370, 925, 385, 850, 412, 825, 450, 855, 480, 835, 505, 860, 525, 930, 590, 880, 640, 940, 680, 905, 705, 835, 735, 855, 760, 945, 785, 920, 830, 945, 860, 885, 880, 905, 935, 870, 990, 950, 1020, 945, 1055, 840, 1085, 838, 1145, 935, 1198, 945]),
    ...crop(700, 550, [335, 910, 380, 890, 410, 925, 440, 822, 465, 875, 500, 868, 525, 930, 590, 835, 620, 850, 645, 938, 665, 905, 700, 925, 750, 945, 780, 885, 800, 875, 865, 845, 905, 865, 945, 950, 1000, 945, 1040, 905, 1060, 935, 1090, 875, 1130, 930, 1150, 885, 1195, 930]),
    ...crop(1000, 530, [320, 905, 350, 905, 375, 960, 410, 1015, 430, 995, 480, 1005, 505, 945, 530, 930])
];
const stochRed = [
    ...crop(0, 550, [145, 870, 170, 880, 190, 895, 210, 945, 250, 930, 285, 918, 310, 935, 345, 880, 390, 915, 430, 895, 465, 935, 530, 910, 575, 875, 610, 925, 660, 950, 700, 880, 725, 845, 750, 885, 780, 900, 805, 930, 830, 900, 865, 840, 900, 930, 945, 942, 985, 905, 1020, 860, 1055, 930, 1090, 910, 1120, 860, 1170, 845, 1200, 855]),
    ...crop(400, 550, [40, 900, 70, 850, 100, 840, 135, 830, 170, 855, 200, 935, 235, 935, 265, 918, 310, 900, 345, 915, 380, 905, 410, 835, 450, 850, 490, 840, 525, 900, 540, 910, 590, 885, 650, 945, 690, 890, 720, 850, 745, 870, 775, 925, 830, 940, 870, 910, 940, 880, 1000, 945, 1040, 930, 1090, 845, 1150, 935, 1198, 945]),
    ...crop(700, 550, [350, 912, 390, 895, 415, 910, 445, 825, 480, 860, 510, 880, 540, 920, 600, 845, 630, 880, 650, 930, 700, 925, 770, 940, 800, 880, 850, 875, 885, 848, 920, 875, 975, 945, 1040, 930, 1090, 880, 1140, 900, 1198, 915]),
    ...crop(1000, 530, [340, 905, 370, 935, 410, 990, 480, 1010, 510, 960, 530, 935])
];
let stochSvg = grid(821, 871, [846]);
stochSvg += line(0, 832.5, 1187, 832.5, '#000', 1) + line(0, 860.5, 1187, 860.5, '#000', 1);
stochSvg += curve(stochRed, '#d0302a', 1) + poly(stochBlue, '#2b2b9e', 1);
stochSvg += arrow(1187, 843, '#d0302a') + `<circle cx="1178" cy="845" r="3.5" fill="none" stroke="#2a3ad0" stroke-width="1"/>`;
stochSvg += ticks([824, 832, 846, 860, 870]);
setup('stochastic-plot', 821, 50, 0, 1187, stochSvg);
setup('stochastic-axis', 820, 53, 1189, 30,
    axisLabel(826, '100') + axisLabel(866, '0') + axisTag(838, 854, 1225, '#fdbb1a', '52,38'));
```
